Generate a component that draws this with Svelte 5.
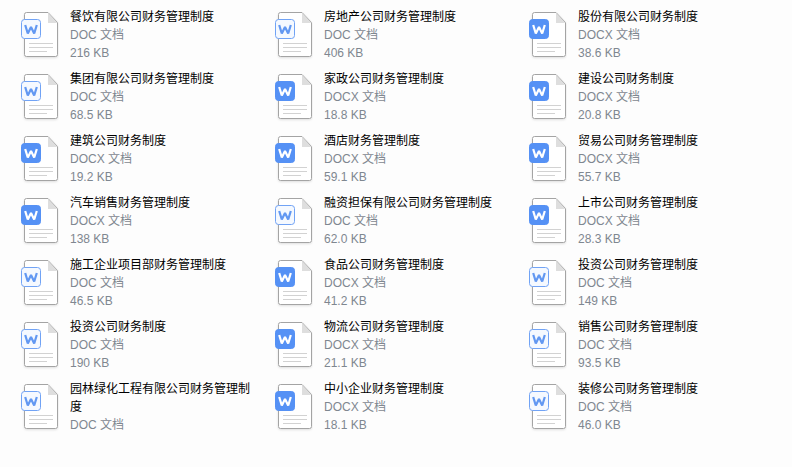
<script>
  const cols = [
    [
      ['餐饮有限公司财务管理制度', 'DOC 文档', '216 KB'],
      ['集团有限公司财务管理制度', 'DOC 文档', '68.5 KB'],
      ['建筑公司财务制度', 'DOCX 文档', '19.2 KB'],
      ['汽车销售财务管理制度', 'DOCX 文档', '138 KB'],
      ['施工企业项目部财务管理制度', 'DOC 文档', '46.5 KB'],
      ['投资公司财务制度', 'DOC 文档', '190 KB'],
      ['园林绿化工程有限公司财务管理制度', 'DOC 文档', '']
    ],
    [
      ['房地产公司财务管理制度', 'DOC 文档', '406 KB'],
      ['家政公司财务管理制度', 'DOCX 文档', '18.8 KB'],
      ['酒店财务管理制度', 'DOCX 文档', '59.1 KB'],
      ['融资担保有限公司财务管理制度', 'DOC 文档', '62.0 KB'],
      ['食品公司财务管理制度', 'DOCX 文档', '41.2 KB'],
      ['物流公司财务管理制度', 'DOCX 文档', '21.1 KB'],
      ['中小企业财务管理制度', 'DOCX 文档', '18.1 KB']
    ],
    [
      ['股份有限公司财务制度', 'DOCX 文档', '38.6 KB'],
      ['建设公司财务制度', 'DOCX 文档', '20.8 KB'],
      ['贸易公司财务管理制度', 'DOCX 文档', '55.7 KB'],
      ['上市公司财务管理制度', 'DOCX 文档', '28.3 KB'],
      ['投资公司财务管理制度', 'DOC 文档', '149 KB'],
      ['销售公司财务管理制度', 'DOC 文档', '93.5 KB'],
      ['装修公司财务管理制度', 'DOC 文档', '46.0 KB']
    ]
  ];
</script>

<main class="grid">
  {#each cols as col}
    <section class="col">
      {#each col as f}
        <article class="item">
          <svg class="icon" viewBox="0 0 38 48" aria-hidden="true">
            <path class="page" d="M3.500 2.500a2 2 0 0 1 2-2H27L36.500 10.500V42.500a2 2 0 0 1-2 2H5.500a2 2 0 0 1-2-2Z" />
            <path class="fold" d="M27 1V11H36.500Z" />
            <path class="rule" d="M8 31.500H32M8 35.500H32M8 39.500H26" />
            <rect class={f[1].startsWith('DOCX') ? 'tag solid' : 'tag'} x="0.500" y="7.500" width="19" height="19" rx="3" />
            <path class={f[1].startsWith('DOCX') ? 'w solid' : 'w'} d="M4.200 13L6.800 21.500L10 15L13.200 21.500L15.800 13" />
          </svg>
          <div class="text">
            <div class="name">{f[0]}</div>
            <div class="meta">{f[1]}</div>
            {#if f[2]}<div class="meta">{f[2]}</div>{/if}
          </div>
        </article>
      {/each}
    </section>
  {/each}
</main>

<style>
  :global(body) {
    background: #fdfdfd;
  }
  .grid {
    display: flex;
    padding: 8px 0 0 21px;
    font-family: "Liberation Sans", "Noto Sans CJK SC", sans-serif;
    font-size: 12px;
    line-height: 18px;
  }
  .col {
    width: 254px;
    flex: none;
  }
  .item {
    display: flex;
    height: 62px;
    width: 233px;
  }
  .icon {
    flex: none;
    width: 38px;
    height: 48px;
    margin: 4px 11px 0 0;
  }
  .page {
    fill: #fff;
    stroke: #a4a4a4;
    stroke-width: 1;
    filter: drop-shadow(0 1px 1px rgba(0, 0, 0, 0.12));
  }
  .fold { fill: #dedede; }
  .rule { fill: none; stroke: #d2d2d2; stroke-width: 1; }
  .tag { fill: #f5f9ff; stroke: #71a3f5; stroke-width: 1; }
  .tag.solid { fill: #5591f5; stroke: #5591f5; }
  .w { fill: none; stroke: #6298f2; stroke-width: 2.200; stroke-linejoin: bevel; }
  .w.solid { stroke: #fff; }
  .text { min-width: 0; }
  .name { color: #000; }
  .meta { color: #7f8790; }
</style>
